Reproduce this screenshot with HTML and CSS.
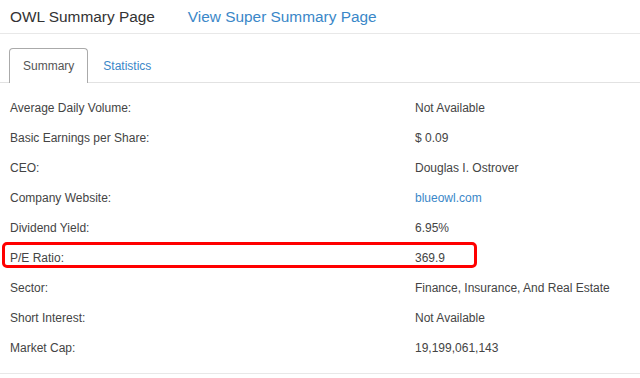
FILE: index.html
```html
<!DOCTYPE html>
<html>
<head>
<meta charset="utf-8">
<link rel="stylesheet" href="styles.css">
</head>
<body>
<div class="header">
  <span class="title">OWL Summary Page</span>
  <a class="super-link" href="#">View Super Summary Page</a>
</div>
<div class="tabs">
  <div class="tab active">Summary</div>
  <div class="tab">Statistics</div>
</div>
<div class="table">
  <div class="row"><span class="label">Average Daily Volume:</span><span class="value">Not Available</span></div>
  <div class="row"><span class="label">Basic Earnings per Share:</span><span class="value">$ 0.09</span></div>
  <div class="row"><span class="label">CEO:</span><span class="value">Douglas I. Ostrover</span></div>
  <div class="row"><span class="label">Company Website:</span><span class="value"><a class="link" href="#">blueowl.com</a></span></div>
  <div class="row"><span class="label">Dividend Yield:</span><span class="value">6.95%</span></div>
  <div class="row highlighted"><span class="label">P/E Ratio:</span><span class="value">369.9</span><span class="marker"></span></div>
  <div class="row"><span class="label">Sector:</span><span class="value">Finance, Insurance, And Real Estate</span></div>
  <div class="row"><span class="label">Short Interest:</span><span class="value">Not Available</span></div>
  <div class="row"><span class="label">Market Cap:</span><span class="value">19,199,061,143</span></div>
</div>
</body>
</html>
```
FILE: styles.css
```css
html, body {
  margin: 0;
  padding: 0;
  background: #fff;
  font-family: "Liberation Sans", Arial, sans-serif;
  color: #444;
}
.header {
  height: 34px;
  border-bottom: 1px solid #e8e8e8;
  display: flex;
  align-items: center;
  padding-left: 10px;
  box-sizing: border-box;
}
.title {
  font-size: 15.4px;
  color: #333;
}
.super-link {
  margin-left: 33px;
  font-size: 15.4px;
  color: #3a87c8;
  text-decoration: none;
}
.tabs {
  display: flex;
  margin-top: 14px;
  padding-left: 9px;
  border-bottom: 1px solid #e2e2e2;
  height: 34px;
}
.tab {
  font-size: 12px;
  height: 34px;
  line-height: 34px;
  padding: 0 14px;
  border: 1px solid transparent;
  border-bottom: none;
  color: #3a87c8;
  box-sizing: border-box;
}
.tab.active {
  color: #555;
  border-color: #aaa;
  border-radius: 4px 4px 0 0;
  background: #fff;
  height: 35px;
  padding: 0 13px;
}
.table {
  padding: 10px 0 10px 10px;
  border-bottom: 1px solid #e8e8e8;
}
.row {
  position: relative;
  display: grid;
  grid-template-columns: 405px 1fr;
  height: 30px;
  align-items: center;
  font-size: 12px;
  color: #444;
}
.link {
  color: #3a87c8;
  text-decoration: none;
}
.marker {
  position: absolute;
  left: -8px;
  top: -1px;
  width: 475px;
  height: 26px;
  border: 3px solid #f00;
  border-radius: 5px;
  box-sizing: border-box;
}
```
